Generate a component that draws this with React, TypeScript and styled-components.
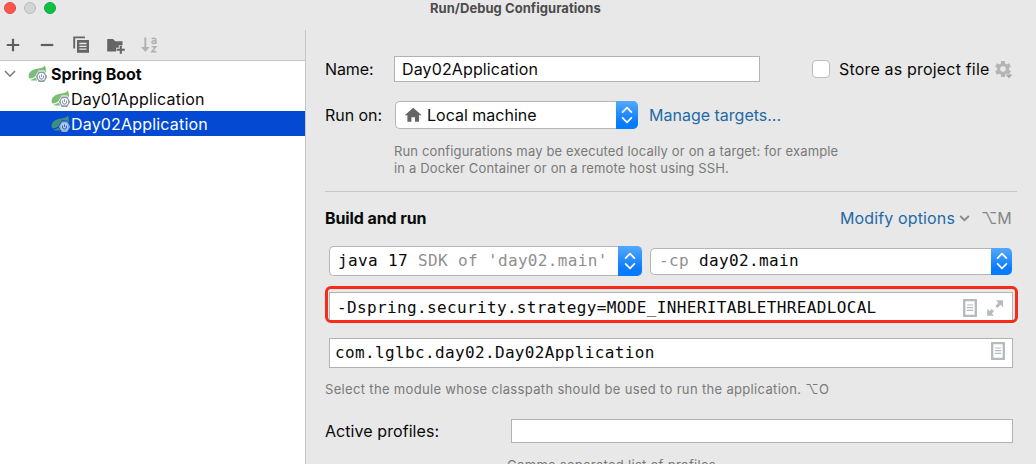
import React from "react";
import styled, { createGlobalStyle } from "styled-components";

const Global = createGlobalStyle`
  * { box-sizing: border-box; }
  body { margin: 0; background: #e8e8e8; }
`;

const Window = styled.div`
  width: 1036px;
  height: 464px;
  overflow: hidden;
  display: flex;
  flex-direction: column;
  background: #e8e8e8;
  color: #0a0a0a;
  font-family: Inter, "Liberation Sans", sans-serif;
  font-size: 16px;
  white-space: pre;
`;

const TitleBar = styled.header`
  flex: none;
  height: 30px;
  display: grid;
  grid-template-columns: 430px 1fr;
  align-items: start;
`;

const Lights = styled.div`
  display: flex;
  gap: 8px;
  padding: 2px 0 0 4px;
`;

const Light = styled.span<{ $fill: string; $edge: string }>`
  width: 12px;
  height: 12px;
  border-radius: 50%;
  background: ${(p) => p.$fill};
  border: 1px solid ${(p) => p.$edge};
`;

const Title = styled.h1`
  margin: 0;
  font-size: 13px;
  line-height: 16px;
  font-weight: 700;
  color: #4c4c4c;
  letter-spacing: 0.05px;
`;

const Body = styled.div`
  flex: 1;
  min-height: 0;
  display: flex;
`;

const Sidebar = styled.aside`
  width: 306px;
  flex: none;
  display: flex;
  flex-direction: column;
  border-right: 1px solid #c6c6c6;
`;

const Toolbar = styled.div`
  height: 31px;
  flex: none;
  display: flex;
  align-items: center;
  gap: 16px;
  padding-left: 4px;
  border-bottom: 1px solid #c6c6c6;

  svg { display: block; }
`;

const Tree = styled.div`
  flex: 1;
  background: #fff;
  padding-top: 1px;
`;

const TreeRow = styled.div<{ $depth?: number; $selected?: boolean; $bold?: boolean; $spacing: number }>`
  height: ${(p) => (p.$bold ? 24 : 25)}px;
  display: flex;
  align-items: center;
  gap: ${(p) => (p.$bold ? 3 : 0)}px;
  padding-left: ${(p) => (p.$depth ? 51 : 4)}px;
  background: ${(p) => (p.$selected ? "#0349d1" : "transparent")};
  color: ${(p) => (p.$selected ? "#fff" : "#0a0a0a")};
  font-weight: ${(p) => (p.$bold ? 700 : 400)};
  letter-spacing: ${(p) => p.$spacing}px;

  svg { display: block; flex: none; }
`;

const Twisty = styled.span`
  width: 21px;
`;

const Main = styled.main`
  flex: 1;
  display: flex;
  flex-direction: column;
  padding: 0 19px;
`;

const Row = styled.div<{ $top: number; $height: number; $align?: string }>`
  flex: none;
  display: flex;
  align-items: ${(p) => p.$align ?? "center"};
  margin-top: ${(p) => p.$top}px;
  height: ${(p) => p.$height}px;
`;

const Label = styled.span<{ $width?: number; $spacing?: number }>`
  width: ${(p) => (p.$width ? `${p.$width}px` : "auto")};
  letter-spacing: ${(p) => p.$spacing ?? 0}px;
  line-height: 20px;
  flex: none;
`;

const Gap = styled.span<{ $width: number }>`
  width: ${(p) => p.$width}px;
  flex: none;
`;

const Link = styled(Label)`
  color: #2369a6;
`;

const Shortcut = styled(Label)`
  color: #858585;
  font-family: Inter, "DejaVu Sans", sans-serif;
`;

const Heading = styled.h2`
  margin: 0;
  flex: 1;
  font-size: 16px;
  line-height: 20px;
  font-weight: 700;
  letter-spacing: -0.1px;
`;

const Hint = styled.p<{ $top: number; $left?: number; $spacing: number }>`
  flex: none;
  margin: ${(p) => p.$top}px 0 0 ${(p) => p.$left ?? 0}px;
  font-family: Inter, "DejaVu Sans", sans-serif;
  font-size: 13px;
  line-height: 17px;
  letter-spacing: ${(p) => p.$spacing}px;
  color: #797979;
`;

const Field = styled.div<{ $width?: number; $height: number; $pad?: number; $spacing?: number }>`
  width: ${(p) => (p.$width ? `${p.$width}px` : "auto")};
  height: ${(p) => p.$height}px;
  display: flex;
  align-items: center;
  padding-left: ${(p) => p.$pad ?? 8}px;
  border: 1px solid #b2b2b2;
  background: #fff;
  letter-spacing: ${(p) => p.$spacing ?? 0}px;

  svg { display: block; flex: none; }
`;

const Mono = styled.span<{ $muted?: boolean }>`
  font-family: "DejaVu Sans Mono", "Liberation Mono", monospace;
  font-size: 16px;
  line-height: 20px;
  letter-spacing: 0.36px;
  color: ${(p) => (p.$muted ? "#8f8f8f" : "#0a0a0a")};
`;

const SelectBox = styled.div<{ $width: number; $height: number; $pad: number }>`
  width: ${(p) => p.$width}px;
  height: ${(p) => p.$height}px;
  display: flex;
  align-items: center;
  padding-left: ${(p) => p.$pad}px;
  border: 1px solid #b5b5b5;
  border-right: 0;
  border-radius: 5px;
  background: #fff;
`;

const Stepper = styled.span<{ $width: number }>`
  width: ${(p) => p.$width}px;
  align-self: stretch;
  margin: -1px 0 -1px auto;
  display: flex;
  align-items: center;
  justify-content: center;
  border-radius: 0 5px 5px 0;
  background: linear-gradient(#55a9fb, #0a7bfb 75%, #047bff);
`;

const Checkbox = styled.span`
  width: 18px;
  height: 18px;
  margin: 0 9px 0 52px;
  border: 1px solid #bdbdbd;
  border-radius: 4px;
  background: #fff;
`;

const Separator = styled.hr`
  flex: none;
  width: 100%;
  height: 1px;
  margin: 14px 0 0;
  border: 0;
  background: #c8c8c8;
`;

const Highlight = styled.div`
  flex: none;
  height: 37px;
  margin: 10px -1px 0 0;
  padding: 3px 2px 0 1px;
  border: 3px solid #f82a1a;
  border-radius: 6px;

  > div {
    border-bottom: 0;
    padding-top: 2px;
  }
`;

const FieldIcons = styled.span<{ $end: number; $lift?: number }>`
  display: flex;
  align-items: center;
  gap: 9px;
  margin-left: auto;
  padding: 0 ${(p) => p.$end}px ${(p) => p.$lift ?? 0}px 0;
`;

function SpringIcon({ selected }: { selected?: boolean }) {
  const leaf = selected ? "#3f8f80" : "#7dbe77";
  const gear = selected ? "#8fa9cf" : "#8d9aa8";
  const ground = selected ? "#0349d1" : "#fff";
  return (
    <svg width="20" height="18" viewBox="0 0 20 18">
      <path d="M16.8 0.6C15.6 2.6 13.8 3 10.5 3.4C5 4 0.6 6.5 0.6 11C0.6 12.4 1 13.2 1.9 13.6C5.5 13 8 11.5 10.2 9L17.8 7.5C18.2 5 17.8 2.4 16.8 0.6Z" fill={leaf} />
      <path d="M2.4 14.7C5.5 14.2 7 13.2 9 11.6V15.6H5.4C4 15.7 3 15.4 2.4 14.7Z" fill={leaf} />
      <path d="M10.7 5.6H16.3L20 11.8L16.3 18H10.7L7.1 11.8Z" fill={ground} />
      <path d="M10.8 6.6H16.2L19.2 11.8L16.2 17H10.8L7.9 11.8Z" fill={gear} />
      <circle cx="13.5" cy="11.8" r="3.7" fill={selected ? "#bfd0ea" : "#fff"} />
      <path d="M11.9 10.5A2.1 2.1 0 1 0 15.1 10.5M13.5 9.2V12" stroke={selected ? "#2c62c4" : gear} strokeWidth="1.1" fill="none" />
    </svg>
  );
}

function Arrows() {
  return (
    <svg width="12" height="18" viewBox="0 0 12 18" fill="none" stroke="#fff" strokeWidth="1.7" strokeLinecap="round" strokeLinejoin="round">
      <path d="M1.6 6.2L6 1.6L10.4 6.2M1.6 11.8L6 16.4L10.4 11.8" />
    </svg>
  );
}

function DocIcon() {
  return (
    <svg width="14" height="18" viewBox="0 0 14 18">
      <path d="M1.2 1.2H12.8V16.8H1.2Z" fill="#fff" stroke="#b5babd" strokeWidth="2.3" />
      <path d="M3.9 6H10.1M3.9 8.7H10.1M3.9 11.4H10.1" stroke="#b5babd" strokeWidth="1.2" />
    </svg>
  );
}

export default function App() {
  return (
    <Window>
      <Global />
      <TitleBar>
        <Lights>
          <Light $fill="#ff544d" $edge="#e2463f" />
          <Light $fill="#d3d3d3" $edge="#bcbcbc" />
          <Light $fill="#0fc043" $edge="#0cab3a" />
        </Lights>
        <Title>Run/Debug Configurations</Title>
      </TitleBar>
      <Body>
        <Sidebar>
          <Toolbar>
            <svg width="18" height="18" viewBox="0 0 18 18">
              <path d="M2.8 9H15.2M9 2.8V15.2" stroke="#5f5f5f" strokeWidth="2.2" />
            </svg>
            <svg width="18" height="18" viewBox="0 0 18 18">
              <path d="M2.8 9H15.3" stroke="#5f5f5f" strokeWidth="2.2" />
            </svg>
            <svg width="18" height="18" viewBox="0 0 18 18">
              <path d="M2.2 12.5V1.4H13" fill="none" stroke="#656565" strokeWidth="1.9" />
              <path d="M5 4H17V16.8H5Z" fill="#656565" />
              <path d="M7.3 7.5H14.5M7.3 10.3H14.5M7.3 13.1H14.5" stroke="#e8e8e8" strokeWidth="1.3" />
            </svg>
            <svg width="19" height="18" viewBox="0 0 19 18">
              <path d="M1.2 3H7L9.3 5.3H16.5V9.3H12.8V11.8H10.2V15.4H1.2Z" fill="#656565" />
              <path d="M10.8 13.8H18.8M14.8 9.8V17.8" stroke="#656565" strokeWidth="2.1" />
            </svg>
            <svg width="18" height="18" viewBox="0 0 18 18" fill="none" stroke="#b2b2b2">
              <path d="M4.3 1.5V13" strokeWidth="2" />
              <path d="M0 11H8.6L4.3 16Z" fill="#b2b2b2" stroke="none" />
              <path d="M10.7 3.1C11.8 1.9 14.9 1.8 14.9 4V8M14.9 4.8C12 4.6 10.9 5.1 10.9 6.2C10.9 8 14 7.7 14.9 6.2" strokeWidth="1.5" />
              <path d="M10.6 10.8H14.8L10.8 15.6H15.4" strokeWidth="1.6" />
            </svg>
          </Toolbar>
          <Tree>
            <TreeRow $bold $spacing={-0.08}>
              <Twisty>
                <svg width="12" height="10" viewBox="0 0 12 10" fill="none" stroke="#7b7b7b" strokeWidth="1.6">
                  <path d="M1 2L6 7.2L11 2" />
                </svg>
              </Twisty>
              <SpringIcon />
              <Label $spacing={-0.08}>Spring Boot</Label>
            </TreeRow>
            <TreeRow $depth={1} $spacing={0.18}>
              <SpringIcon />
              Day01Application
            </TreeRow>
            <TreeRow $depth={1} $selected $spacing={0.18}>
              <SpringIcon selected />
              Day02Application
            </TreeRow>
          </Tree>
        </Sidebar>
        <Main>
          <Row $top={25} $height={28}>
            <Label $width={69} $spacing={-0.1}>Name:</Label>
            <Field $width={366} $height={26} $pad={7} $spacing={0.13}>Day02Application</Field>
            <Checkbox />
            <Label $spacing={0.18}>Store as project file</Label>
            <Gap $width={5} />
            <svg width="20" height="20" viewBox="0 0 20 20">
              <g fill="#b4b4b4">
                <path d="M7 2H11V18H7Z" />
                <path d="M7 2H11V18H7Z" transform="rotate(60 9 10)" />
                <path d="M7 2H11V18H7Z" transform="rotate(120 9 10)" />
                <circle cx="9" cy="10" r="6" />
              </g>
              <circle cx="9" cy="10" r="2.8" fill="#e8e8e8" />
              <path d="M11 15.2H19L15 19.6Z" fill="#a4a4a4" stroke="#e8e8e8" strokeWidth="0.6" />
            </svg>
          </Row>
          <Row $top={18} $height={28}>
            <Label $width={70} $spacing={-0.05}>Run on:</Label>
            <SelectBox $width={243} $height={28} $pad={9}>
              <svg width="22" height="18" viewBox="0 0 22 18">
                <path d="M8.2 1.8L16.7 9.3H14V15.8H10V11.3H6.4V15.8H2.4V9.3H-0.3Z" fill="#656565" />
              </svg>
              <Label>Local machine</Label>
              <Stepper $width={22}><Arrows /></Stepper>
            </SelectBox>
            <Gap $width={11} />
            <Link>Manage targets...</Link>
          </Row>
          <Hint $top={14} $left={69} $spacing={0.15}>{"Run configurations may be executed locally or on a target: for example\nin a Docker Container or on a remote host using SSH."}</Hint>
          <Separator />
          <Row $top={16} $height={20}>
            <Heading>Build and run</Heading>
            <Link $spacing={0.14}>Modify options</Link>
            <svg width="26" height="12" viewBox="0 0 26 12" fill="none" stroke="#858b92" strokeWidth="1.9">
              <path d="M5.2 4L9.5 8.2L13.8 4" />
            </svg>
            <Shortcut $width={36}>⌥M</Shortcut>
          </Row>
          <Row $top={18} $height={30}>
            <Gap $width={4} />
            <SelectBox $width={313} $height={30} $pad={8}>
              <Mono>java 17 </Mono>
              <Mono $muted>SDK of 'day02.main'</Mono>
              <Stepper $width={24}><Arrows /></Stepper>
            </SelectBox>
            <Gap $width={8} />
            <SelectBox $width={362} $height={27} $pad={8}>
              <Mono $muted>-cp </Mono>
              <Mono>day02.main</Mono>
              <Stepper $width={21}><Arrows /></Stepper>
            </SelectBox>
          </Row>
          <Highlight>
            <Field $height={28} $pad={7}>
              <Mono>-Dspring.security.strategy=MODE_INHERITABLETHREADLOCAL</Mono>
              <FieldIcons $end={8}>
                <DocIcon />
                <svg width="18" height="18" viewBox="0 0 18 18" fill="#b5babd">
                  <path d="M10 1.2H17V8.2L14.6 5.8L11.4 9L9.3 6.9L12.4 3.7Z" />
                  <path d="M1.2 9.8V16.8H8.2L5.8 14.4L8 12.2L5.9 10.1L3.6 12.2Z" />
                </svg>
              </FieldIcons>
            </Field>
          </Highlight>
          <Row $top={15} $height={30}>
            <Gap $width={4} />
            <Field $width={684} $height={30} $pad={5}>
              <Mono>com.lglbc.day02.Day02Application</Mono>
              <FieldIcons $end={7} $lift={5}>
                <DocIcon />
              </FieldIcons>
            </Field>
          </Row>
          <Hint $top={13} $spacing={0.33}>Select the module whose classpath should be used to run the application. ⌥O</Hint>
          <Row $top={21} $height={24}>
            <Label $width={186} $spacing={0.07}>Active profiles:</Label>
            <Field $width={502} $height={24} />
          </Row>
          <Hint $top={14} $left={182} $spacing={0.29}>Comma separated list of profiles</Hint>
        </Main>
      </Body>
    </Window>
  );
}
